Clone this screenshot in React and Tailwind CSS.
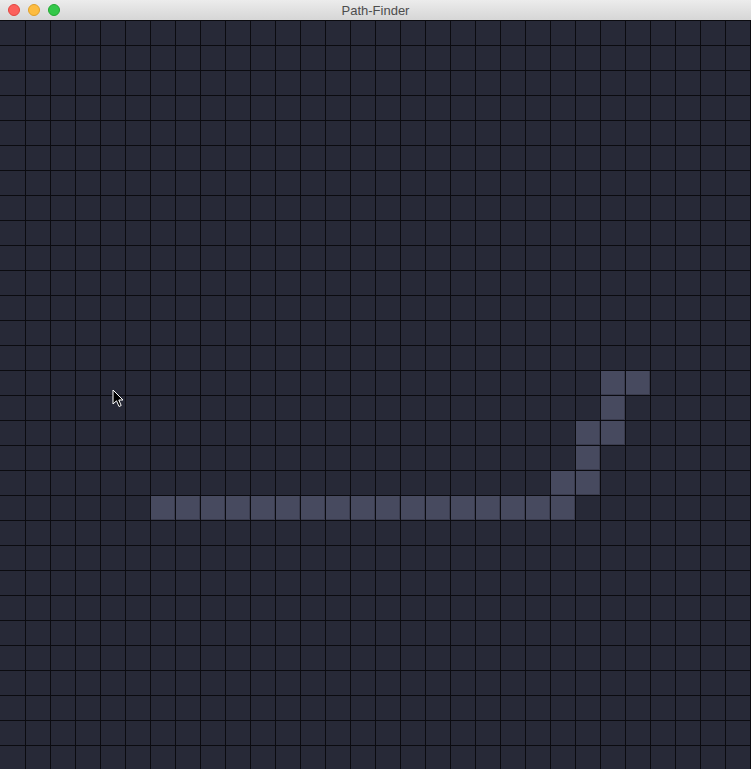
import React from 'react';

const COLS = 30;
const ROWS = 30;

// cells drawn as the found path, [row, col]
const PATH = [
  ...Array.from({ length: 17 }, (_, i) => [19, 6 + i]),
  [18, 22], [18, 23],
  [17, 23],
  [16, 23], [16, 24],
  [15, 24],
  [14, 24], [14, 25],
];

const pathSet = new Set(PATH.map(([r, c]) => `${r}-${c}`));

function TitleBar() {
  return (
    <div className="relative h-[21px] flex items-center justify-center bg-gradient-to-b from-[#ececec] to-[#d6d6d6] border-b border-[#0b0b10]">
      <div className="absolute left-[8px] top-[4px] flex gap-[8px]">
        <span className="w-[12px] h-[12px] rounded-full bg-[#fc605c] border border-[#e2463f]" />
        <span className="w-[12px] h-[12px] rounded-full bg-[#fdbc40] border border-[#e0a028]" />
        <span className="w-[12px] h-[12px] rounded-full bg-[#34c84a] border border-[#22a832]" />
      </div>
      <span className="text-[13px] leading-none text-[#4d4d4d] font-['Liberation_Sans',sans-serif]">
        Path-Finder
      </span>
    </div>
  );
}

function Cursor() {
  return (
    <svg
      className="absolute left-[112px] top-[389px]"
      width="12"
      height="19"
      viewBox="0 0 12 19"
    >
      <path
        d="M1 1 L1 15 L4.5 11.8 L7 17.5 L9.2 16.5 L6.8 11 L11 11 Z"
        fill="#000"
        stroke="#fff"
        strokeWidth="1"
        strokeLinejoin="round"
      />
    </svg>
  );
}

export default function App() {
  const cells = [];
  for (let r = 0; r < ROWS; r++) {
    for (let c = 0; c < COLS; c++) {
      const lit = pathSet.has(`${r}-${c}`);
      cells.push(
        <div
          key={`${r}-${c}`}
          className={
            lit
              ? 'bg-[#474a5f] border-r border-b border-[#3a3c4e]'
              : 'bg-[#272937]'
          }
        />
      );
    }
  }

  return (
    <div className="relative w-[751px] h-[769px] overflow-hidden bg-[#0b0b10]">
      <TitleBar />
      <div className="grid grid-cols-[25px_repeat(29,24px)] auto-rows-[24px] gap-px bg-[#0b0b10]">
        {cells}
      </div>
      <Cursor />
    </div>
  );
}
